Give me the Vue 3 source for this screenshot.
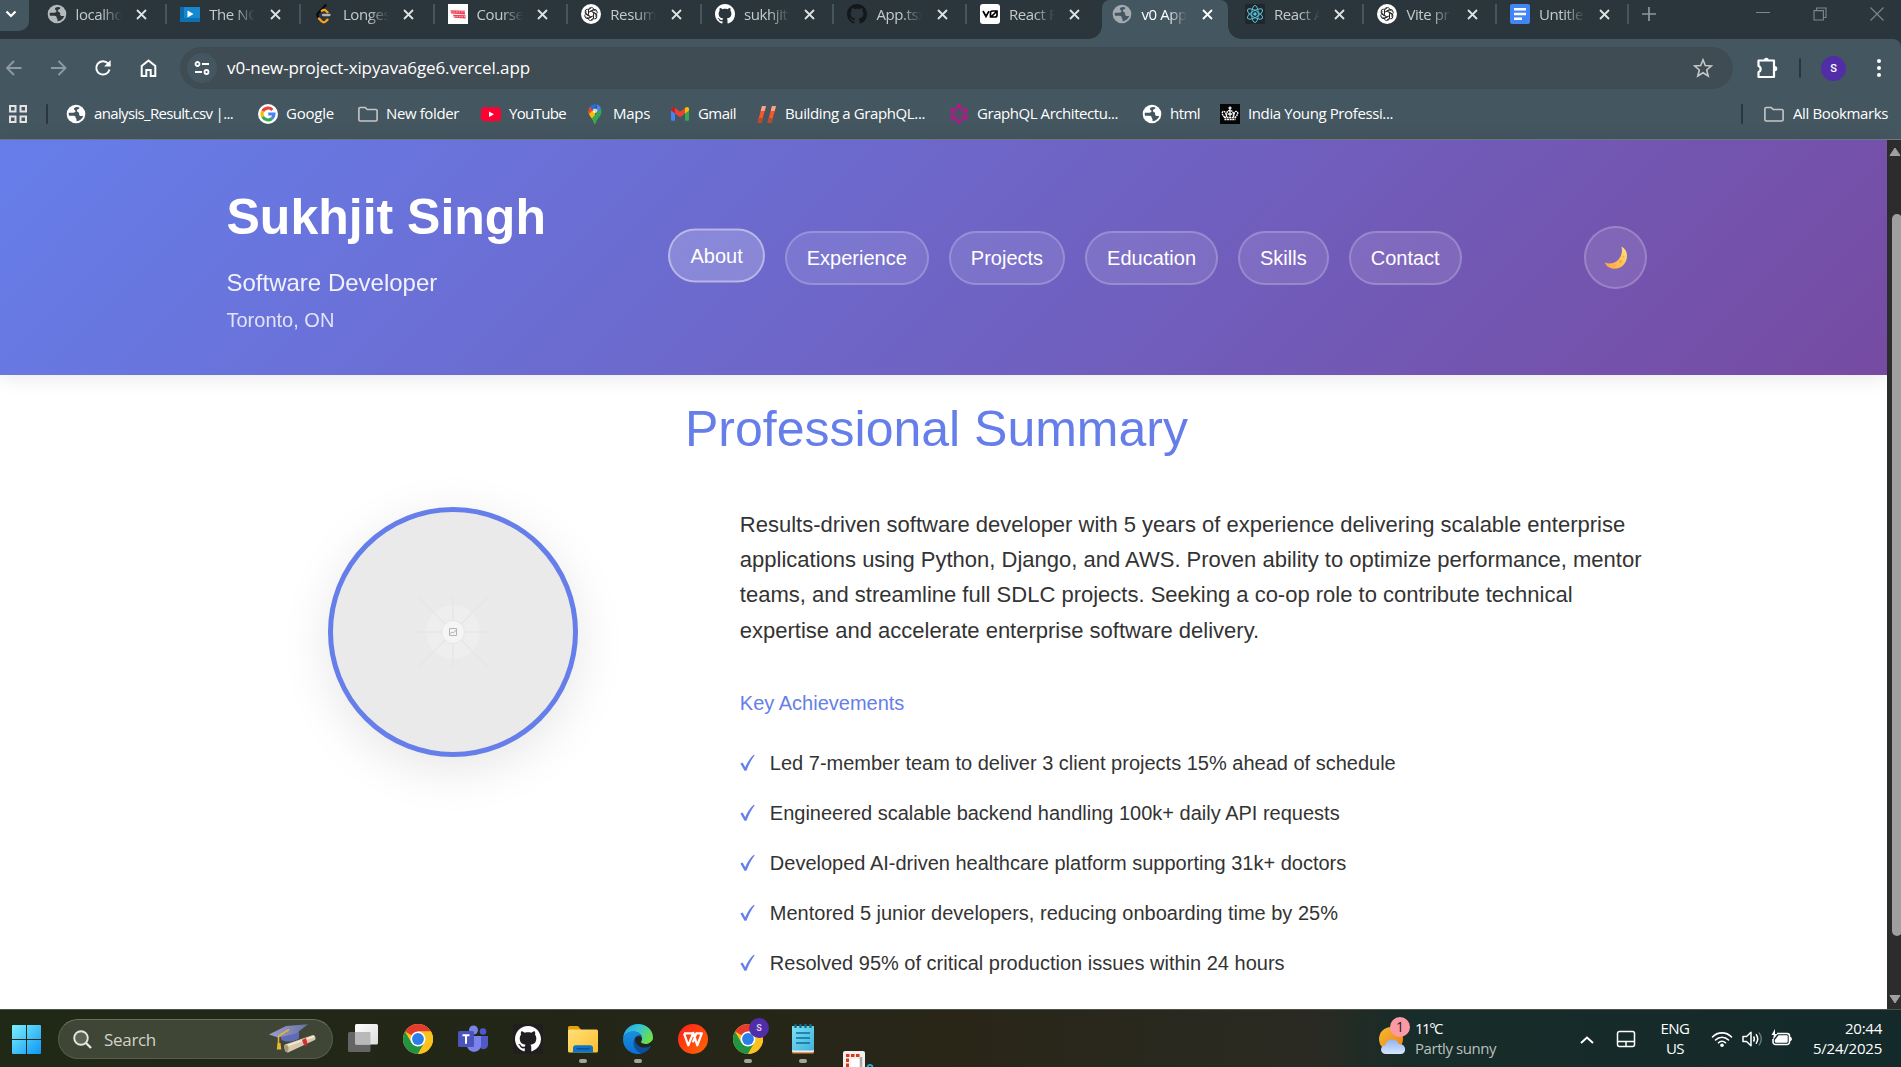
<script setup>
const tabs = [
  { icon: 'globe', text: 'localho', dim: true, width: 133.7 },
  { icon: 'play', text: 'The NO', width: 133.7 },
  { icon: 'leet', text: 'Longes', width: 133.7 },
  { icon: 'course', text: 'Course', width: 133.7 },
  { icon: 'knot', text: 'Resum', width: 133.7 },
  { icon: 'github', text: 'sukhjit', width: 132.5 },
  { icon: 'github', text: 'App.tsx', dark: true, width: 132.5 },
  { icon: 'vzero', text: 'React F', width: 132.5 },
  { icon: 'globe', text: 'v0 App', dim: true, active: true, width: 132.5 },
  { icon: 'react', text: 'React A', width: 132.5 },
  { icon: 'knot', text: 'Vite pr', width: 132.5 },
  { icon: 'docs', text: 'Untitle', width: 132.5 },
]

// span: distance to the next bookmark, text: width of the label
const bookmarks = [
  { icon: 'globe', label: 'analysis_Result.csv |...', span: 192, text: 139 },
  { icon: 'google', label: 'Google', span: 100, text: 48 },
  { icon: 'folder', label: 'New folder', span: 123, text: 73 },
  { icon: 'youtube', label: 'YouTube', span: 104, text: 57 },
  { icon: 'pin', label: 'Maps', span: 85, text: 37 },
  { icon: 'gmail', label: 'Gmail', span: 87, text: 38 },
  { icon: 'slashes', label: 'Building a GraphQL...', span: 192, text: 140 },
  { icon: 'graphql', label: 'GraphQL Architectu...', span: 193, text: 141 },
  { icon: 'globe', label: 'html', span: 78, text: 30 },
  { icon: 'crown', label: 'India Young Professi...', span: 180, text: 145 },
]

const nav = ['About', 'Experience', 'Projects', 'Education', 'Skills', 'Contact']

const achievements = [
  'Led 7-member team to deliver 3 client projects 15% ahead of schedule',
  'Engineered scalable backend handling 100k+ daily API requests',
  'Developed AI-driven healthcare platform supporting 31k+ doctors',
  'Mentored 5 junior developers, reducing onboarding time by 25%',
  'Resolved 95% of critical production issues within 24 hours',
]

const apps = [
  { icon: 'taskview' },
  { icon: 'chrome' },
  { icon: 'teams' },
  { icon: 'githubapp' },
  { icon: 'explorer', open: true },
  { icon: 'edge', open: true },
  { icon: 'wps' },
  { icon: 'chrome', open: true, badge: 'S' },
  { icon: 'notepad', open: true },
]

// Spreads a label's letters so that it takes the given width.
const vFit = {
  mounted(el, { value }) {
    const width = el.getBoundingClientRect().width
    const count = el.textContent.trim().length
    el.style.letterSpacing = ((value - width) / count).toFixed(3) + 'px'
  },
}
</script>

<template>
  <div class="screen">
    <svg class="defs" width="0" height="0">
      <defs>
        <linearGradient id="gWin" x1="0" y1="0" x2="1" y2="1"><stop offset="0" stop-color="#7df0fc" /><stop offset="1" stop-color="#0b97f5" /></linearGradient>
        <linearGradient id="gFolder" x1="0" y1="0" x2="1" y2="1"><stop offset="0" stop-color="#ffe07a" /><stop offset="1" stop-color="#fcbf2d" /></linearGradient>
        <linearGradient id="gWps" x1="0" y1="0" x2="1" y2="1"><stop offset="0" stop-color="#ff1d1d" /><stop offset="1" stop-color="#ff6a00" /></linearGradient>
        <linearGradient id="gEdge" x1="0" y1="0" x2="1" y2=".5"><stop offset="0" stop-color="#1fa5e0" /><stop offset=".5" stop-color="#35c3d6" /><stop offset="1" stop-color="#6be04b" /></linearGradient>
        <linearGradient id="gEdge2" x1="0" y1="0" x2="0" y2="1"><stop offset="0" stop-color="#1c8fe0" /><stop offset="1" stop-color="#0b6fd0" /></linearGradient>
        <linearGradient id="gNote" x1="0" y1="0" x2="1" y2="1"><stop offset="0" stop-color="#7fdff5" /><stop offset="1" stop-color="#3fb3da" /></linearGradient>
        <linearGradient id="gMoon" x1="1" y1="0" x2="0" y2="1"><stop offset="0" stop-color="#ffe484" /><stop offset=".5" stop-color="#ffc556" /><stop offset="1" stop-color="#ff9f45" /></linearGradient>
        <linearGradient id="gSun" x1="0" y1="0" x2="1" y2="1"><stop offset="0" stop-color="#f3bb2f" /><stop offset="1" stop-color="#f17d1b" /></linearGradient>
        <linearGradient id="gCloud" x1="0" y1="0" x2="0" y2="1"><stop offset="0" stop-color="#8fb4f2" /><stop offset="1" stop-color="#d8e6fd" /></linearGradient>
        <linearGradient id="gView" x1="0" y1="0" x2="1" y2="1"><stop offset="0" stop-color="#fff" /><stop offset="1" stop-color="#dcdcdc" /></linearGradient>
        <linearGradient id="gCap" x1="0" y1="0" x2="1" y2="0"><stop offset="0" stop-color="#9aa0d0" /><stop offset="1" stop-color="#6970a4" /></linearGradient>
      </defs>

      <symbol id="globe" viewBox="0 0 20 20">
        <circle cx="10" cy="10" r="9.3" fill="currentColor" />
        <path d="M11 2.900c-2.200.3-3.300 1.200-3 2.300.2 1 1.400.8 1.500 1.800.1 1.300-1 1.700-2.300 1.700H2.800a7.400 7.400 0 0 0 .2 3.100h4.600c1.300 0 2 .7 2 1.800 0 .9.900 1 .9 1.900v1.800c3.300-.2 5.900-2.300 6.700-5.200h-2c-1.400 0-2.100-.7-2.100-1.800V9.200c0-.8-.7-1.100-1.300-1.300-.9-.3-1.100-1.100-.7-1.900.3-.7 1.400-.8 2-1.300l.300-1.100A7.500 7.500 0 0 0 11 2.900z" fill="var(--hole, #445660)" />
      </symbol>
      <symbol id="play" viewBox="0 0 20 20">
        <rect y="3" width="20" height="15" fill="#1489cf" /><rect y="3" width="4" height="15" fill="#0a6cad" /><rect y="14" width="20" height="4" fill="#0b71b4" />
        <path d="M7.500 6.500v7l6-3.500z" fill="#fff" />
      </symbol>
      <symbol id="leet" viewBox="0 0 20 20">
        <g fill="none" stroke-width="2.300" stroke-linecap="round"><path d="M11.500 1.200 4.600 8.600c-1.600 1.600-1.600 3-.3 4.600" stroke="#0b0b0b" /><path d="M7.800 6.800c1.500-1.200 3.200-1 4.400.2l1.300 1.300M5 14.500l2.600 2.800c1.300 1.300 3 1.300 4.300 0l1.600-1.700" stroke="#ffa116" /><path d="M9 11h6.500" stroke="#b3b3b3" /></g>
      </symbol>
      <symbol id="course" viewBox="0 0 20 20">
        <rect width="20" height="20" fill="#fff" /><path d="M2.500 6.200 17 6.800v3.600l-14-.8zM5 10.800l12.500.4v3.400l-11.500-.8z" fill="#ef4056" /><path d="M3 8h14M6 12.600h11" stroke="#fff" stroke-width=".6" stroke-dasharray="1.500 1" />
      </symbol>
      <symbol id="knot" viewBox="0 0 20 20">
        <circle cx="10" cy="10" r="10" fill="#fff" />
        <g fill="none" stroke="#222" stroke-width=".9">
          <path v-for="n in 6" :key="n" d="M7.500 9.800V6.200c0-3.100 4.200-3.700 5.200-1.200M7.500 8.400l3.300-1.900c1.600-.9 3.400-.4 4.100.8" :transform="`rotate(${n * 60} 10 10)`" />
        </g>
      </symbol>
      <symbol id="github" viewBox="0 0 16 16">
        <path fill="currentColor" d="M8 0C3.580 0 0 3.580 0 8c0 3.540 2.290 6.530 5.470 7.590.4.070.55-.17.55-.38 0-.19-.01-.82-.01-1.490-2.010.37-2.530-.49-2.690-.94-.09-.23-.48-.94-.82-1.130-.28-.15-.68-.52-.01-.53.63-.01 1.080.58 1.230.82.72 1.210 1.870.87 2.330.66.07-.52.28-.87.51-1.070-1.780-.2-3.640-.89-3.640-3.950 0-.87.31-1.590.82-2.150-.08-.2-.36-1.020.08-2.120 0 0 .67-.21 2.200.82.64-.18 1.320-.27 2-.27s1.360.09 2 .27c1.530-1.040 2.200-.82 2.200-.82.44 1.100.16 1.920.08 2.120.51.56.82 1.270.82 2.150 0 3.070-1.870 3.750-3.650 3.950.29.25.54.73.54 1.480 0 1.070-.01 1.930-.01 2.200 0 .21.15.46.55.38A8.010 8.010 0 0 0 16 8c0-4.420-3.580-8-8-8z" />
      </symbol>
      <symbol id="vzero" viewBox="0 0 20 20">
        <rect width="20" height="20" rx="3" fill="#fff" /><path d="M3 7l3 5.500L9 7.200M10.500 13V9c0-1.300.7-2 2-2H17v4c0 1.300-.7 2-2 2h-4.500zM11.500 12.500l5-5" fill="none" stroke="#000" stroke-width="1.700" />
      </symbol>
      <symbol id="react" viewBox="0 0 20 20">
        <rect width="20" height="20" rx="2" fill="#20262b" /><circle cx="10" cy="10" r="1.700" fill="#58c4dc" />
        <g fill="none" stroke="#58c4dc"><ellipse v-for="n in 3" :key="n" cx="10" cy="10" rx="8.500" ry="3.300" :transform="`rotate(${n * 60 + 30} 10 10)`" /></g>
      </symbol>
      <symbol id="docs" viewBox="0 0 20 20">
        <rect width="20" height="20" rx="2" fill="#4285f4" /><path d="M4 5.300h12M4 10h12M4 14.700h8" stroke="#fff" stroke-width="2.400" />
      </symbol>

      <symbol id="google" viewBox="0 0 24 24">
        <circle cx="12" cy="12" r="12" fill="#fff" />
        <g fill="none" stroke-width="3.700"><path d="M17.300 7.200A7.200 7.200 0 0 0 5.700 8.600" stroke="#ea4335" /><path d="M5.700 8.600a7.200 7.200 0 0 0 0 6.800" stroke="#fbbc05" /><path d="M5.700 15.400a7.200 7.200 0 0 0 11 2" stroke="#34a853" /><path d="M16.700 17.400A7.200 7.200 0 0 0 19.200 12H12.300" stroke="#4285f4" /></g>
      </symbol>
      <symbol id="folder" viewBox="0 0 20 20">
        <path d="M.9 4.800c0-.9.500-1.300 1.300-1.300h5l2 2h8.600c.8 0 1.300.5 1.300 1.300v8.900c0 .8-.5 1.300-1.300 1.300H2.200c-.8 0-1.300-.5-1.300-1.300z" fill="none" stroke="#c7c7c7" stroke-width="1.600" />
      </symbol>
      <symbol id="youtube" viewBox="0 0 20 20"><rect y="3.200" width="20" height="14" rx="3.600" fill="#ff0033" /><path d="M8 7.400v5.600l5-2.800z" fill="#fff" /></symbol>
      <symbol id="pin" viewBox="0 0 20 20">
        <path d="M10 20c-.8 0-.8-1.800-2-3.800-1.500-2.500-4.500-5-4.500-9L10 7z" fill="#fbbc04" /><path d="M10 20c.8 0 .8-1.800 2-3.800 1.500-2.500 4.500-5 4.500-9 0-1-.2-2-.6-2.800L6.800 14.400C8.700 16.800 9.300 20 10 20z" fill="#34a853" />
        <path d="M4.800 2.800 8 5.500 4 10.200C3 8 3.200 4.800 4.800 2.800z" fill="#ea4335" /><path d="M4.800 2.800C6.500.6 9.300-.3 12 .5L8 5.500z" fill="#1a73e8" /><path d="M12 .5c1.800.6 3.200 2 3.900 3.900L11.800 9z" fill="#4285f4" /><circle cx="10" cy="6.800" r="2.400" fill="#fff" opacity=".75" />
      </symbol>
      <symbol id="gmail" viewBox="0 0 20 20">
        <path d="M1 5.500v10c0 .8.500 1.300 1.300 1.300H5V8.500z" fill="#4285f4" /><path d="M19 5.500v10c0 .8-.5 1.300-1.300 1.300H15V8.500z" fill="#34a853" /><path d="M15 4v5.500l4-3V5c0-2-2.300-2.800-4-1z" fill="#fbbc04" /><path d="M5 9.500V4l5 3.800L15 4v5.500l-5 3.800z" fill="#ea4335" /><path d="M1 5v1.500l4 3V4C3.300 2.200 1 3 1 5z" fill="#c5221f" />
      </symbol>
      <symbol id="slashes" viewBox="0 0 20 20">
        <path d="M5 2h4L4.500 19H.5zM15 2h4l-4.500 17h-4z" fill="#f4582b" /><path d="M5 2h4L7.700 7H3.700zM15 2h4l-1.300 5h-4z" fill="#f8a287" /><path d="M1.900 14h4l-1.400 5H.5zM11.900 14h4l-1.400 5h-4z" fill="#ba4a2d" />
      </symbol>
      <symbol id="graphql" viewBox="0 0 20 20">
        <g fill="none" stroke="#e10098" stroke-width="1"><path d="M10 2l7 4v8l-7 4-7-4V6zM10 2l7 12H3z" /></g>
        <g fill="#e10098"><circle cx="10" cy="2" r="1.600" /><circle cx="17" cy="6" r="1.600" /><circle cx="17" cy="14" r="1.600" /><circle cx="10" cy="18" r="1.600" /><circle cx="3" cy="14" r="1.600" /><circle cx="3" cy="6" r="1.600" /></g>
      </symbol>
      <symbol id="crown" viewBox="0 0 20 20">
        <rect width="20" height="20" fill="#050505" /><path d="M4.500 15.500h11M4.800 13.500C2.500 11 1.500 9 2.800 7.800 4.400 6.500 6 8 6.500 13c0-4 .5-6.500 3.500-6.500s3.500 2.500 3.500 6.500c.5-5 2.100-6.500 3.700-5.200 1.300 1.200.3 3.200-2 5.700z" fill="none" stroke="#fff" stroke-width="1.400" stroke-dasharray="2 .6" /><path d="M10 2.500v10M8.500 4h3M8 10h4" stroke="#fff" stroke-width="1.300" />
      </symbol>

      <symbol id="taskview" viewBox="0 0 30 30">
        <rect y="8" width="22.500" height="20" rx="1.500" fill="#656565" /><rect x="7" y="0" width="23" height="20.500" rx="1.500" fill="url(#gView)" /><path d="M7 8h15.500v12.500H8.500A1.500 1.500 0 0 1 7 19z" fill="#b9b9b9" />
      </symbol>
      <symbol id="chrome" viewBox="0 0 30 30">
        <circle cx="15" cy="15" r="15" fill="#fcc31e" /><path d="M15 15 2.010 7.500A15 15 0 0 1 27.990 7.500H15z" fill="#e33b2e" /><path d="M2.010 7.500A15 15 0 0 0 15 30l6.500-11.200L15 15 8.500 18.800z" fill="#229342" />
        <path d="M28 7.500H15v7.500l6.500 3.700L15 30A15 15 0 0 0 28 7.500z" fill="#fcc31e" /><circle cx="15" cy="15" r="7.500" fill="#fff" /><circle cx="15" cy="15" r="5.900" fill="#2b7de9" />
      </symbol>
      <symbol id="teams" viewBox="0 0 30 30">
        <circle cx="25" cy="7.500" r="3.300" fill="#5059c9" /><path d="M20 12h10v8.500c0 5-6 6-8 3z" fill="#5059c9" /><circle cx="15.500" cy="6" r="4.500" fill="#7b83eb" /><path d="M9 12h14v9c0 9-14 9-14 0z" fill="#7b83eb" /><rect y="7" width="16" height="16" rx="1.500" fill="#4b53bc" /><path d="M4.500 11.300h7M8 11.300v8.500" stroke="#fff" stroke-width="2" />
      </symbol>
      <symbol id="githubapp" viewBox="0 0 30 30"><rect width="30" height="30" fill="#211d21" /><use href="#github" x="2" y="2" width="26" height="26" color="#fff" /></symbol>
      <symbol id="explorer" viewBox="0 0 30 30">
        <path d="M0 4c0-1.500.7-2 2-2h8l3 3.500V10H0z" fill="#e3a008" /><rect y="5.500" width="30" height="23" rx="1.500" fill="url(#gFolder)" /><path d="M5 28.500V24c0-1.800 1-2.800 2.800-2.800h14.400c1.800 0 2.800 1 2.800 2.800v4.500z" fill="#0f74c4" /><path d="M8.500 24.800h13" stroke="#064a86" stroke-width="1.200" />
      </symbol>
      <symbol id="edge" viewBox="0 0 30 30">
        <circle cx="15" cy="15" r="15" fill="#0c4f9e" /><path d="M.2 14C1 5 8 0 15 0c8 0 15 5.500 15 13.500 0 4.500-3.800 6.500-7.500 6.500-3 0-4.500-1-4.500-2s1-1.500 1-4c0-3-3-6.500-8.500-6.500C5 7.500 1 10.500.2 14z" fill="url(#gEdge)" /><path d="M.2 14C1 10 5 7.500 10.500 7.500c3.500 0 6 1.400 7.400 3.200C13 10.500 10.500 15 10.500 18.500c0 5 3 9.500 8 11-1 .4-2.500.5-3.500.5C7 30-.8 23.500.2 14z" fill="url(#gEdge2)" /><path d="M12 16c.5 4.500 5 8 10 7.500 2.500-.2 4.300-1.200 5.700-1.200.8 0 .6.700.2 1.200l2.100-1.500V16l-4 3.500c-1 .4-2.300.5-3.500.5-3 0-4.500-1-4.500-2s1-1.500 1-4c-4-3-7-1-7 2z" fill="#222618" />
      </symbol>
      <symbol id="wps" viewBox="0 0 30 30"><circle cx="15" cy="15" r="15" fill="url(#gWps)" /><path d="M6 9.300h9.500M6 9.300l4.300 12 5-12.500 4 12.500 4.500-12h-5.500l-3.500 9" fill="none" stroke="#fff" stroke-width="2.200" stroke-linejoin="round" /></symbol>
      <symbol id="notepad" viewBox="0 0 30 30"><rect x="4" y="2" width="22" height="28" rx="1.500" fill="#a2541a" /><rect x="4" y="2" width="22" height="26.500" rx="1.500" fill="#eee" /><rect x="4" y="2" width="22" height="24.500" rx="1" fill="url(#gNote)" /><path d="M8 9h14M8 14h14M8 19h14" stroke="#0a6f9e" stroke-width="1.700" /><path d="M7.500 0v4M12.500 0v4M17.500 0v4M22.500 0v4" stroke="#0a6f8e" stroke-width="2.300" /></symbol>
    </svg>

    <div class="tabstrip">
      <div class="menu"><svg width="12" height="8" viewBox="0 0 12 8"><path d="M1.500 1.500 6 6l4.500-4.500" fill="none" stroke="#fff" stroke-width="2.200" /></svg></div>
      <div v-for="(tab, i) in tabs" :key="i" class="tab" :class="{ active: tab.active, nosep: i === 7 || tab.active }" :style="{ width: tab.width + 'px' }">
        <svg class="favicon" :class="{ dim: tab.dim, dark: tab.dark }" width="20" height="20"><use :href="'#' + tab.icon" /></svg>
        <span class="tabtext">{{ tab.text }}</span>
        <svg class="close" width="11" height="11" viewBox="0 0 11 11"><path d="M1 1l9 9M10 1l-9 9" stroke="currentColor" stroke-width="1.800" /></svg>
      </div>
      <svg class="plus" width="14" height="14" viewBox="0 0 14 14"><path d="M7 0v14M0 7h14" stroke="#8d979c" stroke-width="1.700" /></svg>
      <div class="winbtns">
        <svg width="14" height="14" viewBox="0 0 14 14"><path d="M0 5.500h14" stroke="#7c878d" stroke-width="1" /></svg>
        <svg width="14" height="14" viewBox="0 0 14 14"><path d="M1 3.600h9.400V13H1zM3.500 3.500V1H13v9.500h-2.500" fill="none" stroke="#7c878d" stroke-width="1.100" /></svg>
        <svg width="14" height="14" viewBox="0 0 14 14"><path d="M.5.500l13 13M13.500.500l-13 13" stroke="#7c878d" stroke-width="1.100" /></svg>
      </div>
    </div>

    <div class="toolwrap">
    <div class="toolbar">
      <div class="navbtns">
        <svg width="20" height="20" viewBox="0 0 20 20"><path d="M17.500 10H3.500M10 3l-7 7 7 7" fill="none" stroke="#8f9aa0" stroke-width="1.900" /></svg>
        <svg width="20" height="20" viewBox="0 0 20 20"><path d="M2 10h14M9.500 3l7 7-7 7" fill="none" stroke="#8f9aa0" stroke-width="1.900" /></svg>
        <svg width="20" height="20" viewBox="0 0 20 20"><path d="M16.500 11.500A6.700 6.700 0 1 1 15 5.400l2 2.200" fill="none" stroke="#fff" stroke-width="2" /><path d="M17.600 2v6.500h-6.500z" fill="#fff" /></svg>
        <svg width="20" height="20" viewBox="0 0 20 20"><path d="M3.700 18V8l6.800-5.500L17.300 8v10h-4.600v-6H8.300v6z" fill="none" stroke="#fff" stroke-width="2" /></svg>
      </div>
      <div class="omnibox">
        <div class="siteinfo"><svg width="16" height="16" viewBox="0 0 16 16"><g fill="none" stroke="#fff" stroke-width="1.800"><circle cx="3.500" cy="4" r="2" /><path d="M8 4h7M1 12h7" /><circle cx="12.500" cy="12" r="2" /></g></svg></div>
        <span class="url" v-fit="303">v0-new-project-xipyava6ge6.vercel.app</span>
        <svg class="star" width="20" height="20" viewBox="0 0 20 20"><path d="M10 1.800l2.300 5.700 6 .5-4.600 4 1.500 6-5.200-3.300L4.800 18l1.500-6L1.700 8l6-.5z" fill="none" stroke="#c7c7c7" stroke-width="1.600" /></svg>
      </div>
      <svg class="puzzle" width="22" height="22" viewBox="0 0 22 22"><path d="M2.500 3.500H18V20H2.500v-5c2.800-.8 2.800-5.200 0-6z" fill="none" stroke="#fff" stroke-width="2.200" stroke-linejoin="round" /><path d="M7.800 3.300a2.500 2.500 0 0 1 5 0zM18.700 9a2.600 2.600 0 0 1 0 5.200z" fill="#fff" /></svg>
      <i class="bar"></i>
      <div class="avatar">S</div>
      <svg class="dots" width="4" height="18" viewBox="0 0 4 18"><g fill="#fff"><circle cx="2" cy="2" r="2" /><circle cx="2" cy="9" r="2" /><circle cx="2" cy="16" r="2" /></g></svg>
    </div>
    </div>

    <div class="bookmarks">
      <svg class="grid" width="18" height="18" viewBox="0 0 18 18"><path d="M1 1h5.500v5.500H1zM11.500 1H17v5.500h-5.500zM1 11.500h5.500V17H1zM11.500 11.500H17V17h-5.500z" fill="none" stroke="#e3e3e3" stroke-width="2" /></svg>
      <i class="bar"></i>
      <div class="marks">
        <div v-for="b in bookmarks" :key="b.label" class="mark" :style="{ width: b.span + 'px' }">
          <svg width="20" height="20"><use :href="'#' + b.icon" /></svg><span v-fit="b.text">{{ b.label }}</span>
        </div>
      </div>
      <i class="bar end"></i>
      <div class="mark all"><svg width="22" height="20"><use href="#folder" /></svg><span v-fit="95">All Bookmarks</span></div>
    </div>

    <div class="viewport">
      <div class="page">
        <header class="hero">
          <div class="brand">
            <h1>Sukhjit Singh</h1>
            <p class="role">Software Developer</p>
            <p class="place">Toronto, ON</p>
          </div>
          <nav>
            <a v-for="(n, i) in nav" :key="n" :class="{ current: i === 0 }">{{ n }}</a>
          </nav>
          <div class="toggle">
            <svg width="24" height="24" viewBox="0 0 24 24"><path d="M17.500.5c3.500 2 5.500 5.200 5.500 9.200C23 17 17.500 22.800 10.500 22.800 6 22.800 2.300 20.300.6 16.500c5.200 2 10.600.8 14-3.100 3.300-3.800 4-8.500 2.900-12.900z" fill="url(#gMoon)" /><g fill="#eea444" opacity=".7"><circle cx="16.500" cy="15.500" r="1.700" /><circle cx="10.500" cy="19.500" r="1.200" /><circle cx="19.500" cy="10.500" r="1" /></g></svg>
          </div>
        </header>
        <main>
          <h2>Professional Summary</h2>
          <div class="columns">
            <div class="portrait">
              <svg width="240" height="240" viewBox="0 0 240 240">
                <g stroke="#e4e4e4"><path d="M84 120h72M120 84v72M85 85l70 70M155 85l-70 70" /></g>
                <circle cx="120" cy="120" r="27" fill="#eeeeee" />
                <g stroke="#e6e6e6" stroke-width="1.500"><path d="M93 120h54M120 93v54M101 101l38 38M139 101l-38 38" /></g>
                <circle cx="120" cy="120" r="11.500" fill="#f5f5f5" stroke="#e6e6e6" />
                <path d="M116.500 116.500h7v7h-7zM117 122l2-2 1.500 1 2.500-3" fill="none" stroke="#b4b4b4" />
              </svg>
            </div>
            <div class="copy">
              <p>Results-driven software developer with 5 years of experience delivering scalable enterprise<br>applications using Python, Django, and AWS. Proven ability to optimize performance, mentor<br>teams, and streamline full SDLC projects. Seeking a co-op role to contribute technical<br>expertise and accelerate enterprise software delivery.</p>
              <h3>Key Achievements</h3>
              <ul>
                <li v-for="a in achievements" :key="a"><svg width="15" height="18" viewBox="0 0 15 18"><path d="M.4 9.600 2.600 8.600l2.600 4.600C7.500 8 10 4 13.800.700l.9.500C11 6 8.600 11 6.400 16.800H4.500z" fill="#667eea" /></svg>{{ a }}</li>
              </ul>
            </div>
          </div>
        </main>
      </div>
      <div class="scroll">
        <svg width="12" height="10" viewBox="0 0 12 10"><path d="M6 1l5 7.500H1z" fill="#9f9f9f" stroke="#9f9f9f" stroke-linejoin="round" /></svg>
        <div class="thumb"></div>
        <svg width="12" height="10" viewBox="0 0 12 10"><path d="M6 9 1 1.500h10z" fill="#9f9f9f" stroke="#9f9f9f" stroke-linejoin="round" /></svg>
      </div>
    </div>

    <div class="taskbar">
      <svg class="win" width="29" height="29" viewBox="0 0 29 29"><path d="M1 0h13v14H0V1a1 1 0 0 1 1-1zM15 0h13a1 1 0 0 1 1 1v13H15zM0 15h14v14H1a1 1 0 0 1-1-1zM15 15h14v13a1 1 0 0 1-1 1H15z" fill="url(#gWin)" /></svg>
      <div class="search">
        <svg width="19" height="19" viewBox="0 0 19 19"><circle cx="8" cy="8" r="6.800" fill="#5d6454" stroke="#e6e6e6" stroke-width="1.900" /><path d="M13 13l5 5" stroke="#e6e6e6" stroke-width="2.400" /></svg>
        <span v-fit="52">Search</span>
        <svg class="cap" width="48" height="30" viewBox="0 0 48 30">
          <path d="M12 8v7c3 4 15 3 18-1V6z" fill="#5f6cb5" /><path d="M0 10.500 17 2l22-1.800L27 9.500l-18 4z" fill="url(#gCap)" /><path d="M20 5.500 9.500 12v9" fill="none" stroke="#e9b334" stroke-width="1.500" /><path d="M8.500 19h3l.8 6.500H7.800z" fill="#eeb62c" />
          <path d="M16 20.500 44 11c2-.5 3.500 4 1.800 5L19 28.500c-2.500.5-5-6.500-3-8z" fill="#d8c9ae" /><path d="M17 22l28-9.500" stroke="#f5ecd9" stroke-width="1.500" /><ellipse cx="17.500" cy="24.500" rx="2" ry="3.600" fill="#a89675" /><path d="M33 16l4-2 1.500 5.500-2 3-2-2.500z" fill="#d22f2f" />
        </svg>
      </div>
      <div class="apps">
        <div v-for="(app, i) in apps" :key="i" class="app" :class="{ open: app.open }">
          <svg width="30" height="30"><use :href="'#' + app.icon" /></svg>
          <b v-if="app.badge">{{ app.badge }}</b>
        </div>
      </div>
      <svg class="snip" width="32" height="16" viewBox="0 0 32 16"><rect width="22" height="20" rx="2" fill="#f0f0f0" /><path d="M4.500 16V4.500H17" fill="none" stroke="#d83b12" stroke-width="3" stroke-dasharray="3.500 1.500" /><rect x="8" y="8" width="9" height="9" fill="#fff" /><path d="M18 6v10" stroke="#a9a9a9" stroke-width="2.500" /><circle cx="27" cy="16.500" r="2.500" fill="none" stroke="#2aa5dd" stroke-width="1.800" /></svg>
      <div class="weather">
        <svg width="30" height="36" viewBox="0 0 30 36"><circle cx="12" cy="21" r="12" fill="url(#gSun)" /><path d="M7 36c-6 0-7-8-.5-9C8 20 18 20 19.500 26c8-1 9 10 2 10z" fill="url(#gCloud)" /></svg>
        <b>1</b>
      </div>
      <div class="two forecast"><span v-fit="27">11°C</span><em v-fit="81">Partly sunny</em></div>
      <div class="tray">
        <svg class="chev" width="14" height="8" viewBox="0 0 14 8"><path d="M1 7l6-5.500L13 7" fill="none" stroke="#fff" stroke-width="2" /></svg>
        <svg class="pad" width="20" height="18" viewBox="0 0 20 18"><path d="M3.500 1.500h13a2 2 0 0 1 2 2v11a2 2 0 0 1-2 2h-13a2 2 0 0 1-2-2v-11a2 2 0 0 1 2-2zM1.500 11.500h17M10 11.500v5" fill="none" stroke="#fff" stroke-width="1.500" /></svg>
        <div class="two lang"><span v-fit="29">ENG</span><span v-fit="18">US</span></div>
        <svg class="wifi" width="22" height="18" viewBox="0 0 22 18"><g fill="none" stroke="#fff" stroke-width="1.600" stroke-linecap="round"><path d="M1.500 7a13 13 0 0 1 19 0M4.500 10a9 9 0 0 1 13 0M7.500 12.800a5 5 0 0 1 7 0" /></g><circle cx="11" cy="15.300" r="1.800" fill="#fff" /></svg>
        <svg class="vol" width="21" height="18" viewBox="0 0 21 18"><path d="M1 6.500h3.500L9 2.200v13.600l-4.500-4.300H1z" fill="none" stroke="#fff" stroke-width="1.500" stroke-linejoin="round" /><path d="M11.500 6.500q1.800 2.500 0 5M14 4.300q3.500 4.700 0 9.400" fill="none" stroke="#fff" stroke-width="1.500" /><path d="M17 2.500q4.500 6.500 0 13" fill="none" stroke="#6f8280" stroke-width="1.300" /></svg>
        <svg class="bat" width="22" height="18" viewBox="0 0 22 18"><path d="M6 4.500h10a2.500 2.500 0 0 1 2.500 2.500v6a2.500 2.500 0 0 1-2.500 2.500H4.500A2.500 2.500 0 0 1 2 13v-3" fill="none" stroke="#fff" stroke-width="1.600" /><path d="M7.500 6.300H15.500c.8 0 1.200.4 1.200 1.200v5c0 .8-.4 1.200-1.200 1.200H5c-.8 0-1.200-.4-1.200-1.200V11z" fill="#fff" /><path d="M19.500 8q2 2 0 4z" fill="#fff" stroke="#fff" /><path d="M4 0 .5 6h2.300L2 11l4.500-6H4z" fill="#fff" /></svg>
        <div class="two clock"><span v-fit="37">20:44</span><span v-fit="69">5/24/2025</span></div>
      </div>
    </div>
  </div>
</template>

<style>
body { margin: 0; background: #fff; overflow: hidden; }
</style>

<style scoped>
* { box-sizing: border-box; }
.screen { width: 1901px; height: 1067px; overflow: hidden; display: flex; flex-direction: column; font-family: "Open Sans", "Noto Sans", sans-serif; }
.defs { position: absolute; }
svg { display: block; flex: none; }
h1, h2, h3, p, ul { margin: 0; padding: 0; font-weight: 400; }
span, em { white-space: nowrap; font-style: normal; }

.tabstrip { flex: none; height: 39px; background: #2b363c; display: flex; align-items: flex-start; }
.menu { flex: none; width: 29px; height: 31px; margin-right: 4.500px; background: #445660; border-radius: 0 0 10px 0; display: flex; padding: 10px 0 0 5px; }
.tab { position: relative; height: 39px; flex: none; display: flex; align-items: flex-start; padding: 4px 0 0 13px; color: #c5cacc; --hole: #2b363c; }
.tab::after { content: ""; position: absolute; right: 0; top: 4px; width: 2px; height: 20px; background: #445660; }
.tab.nosep::after { display: none; }
.tab.active { color: #fff; --hole: #445660; }
.tab.active::before { content: ""; position: absolute; left: 3px; right: 4px; top: 0; bottom: 0; background: #445660; border-radius: 8px 8px 0 0; }
.tab.active::after { display: block; left: -10px; right: -9px; top: 26px; width: auto; height: 13px; background: radial-gradient(circle at 0 0, transparent 12.500px, #445660 13px) left / 13px 13px no-repeat, radial-gradient(circle at 100% 0, transparent 12.500px, #445660 13px) right / 13px 13px no-repeat; }
.tab > * { position: relative; }
.favicon { color: #fff; }
.favicon.dim { color: #b4b9bc; }
.active .favicon.dim { color: #a3abb0; }
.favicon.dark { color: #14181a; }
.tabtext { width: 46px; margin-left: 9px; font-size: 15px; letter-spacing: -0.400px; line-height: 21px; -webkit-mask-image: linear-gradient(90deg, #000 55%, transparent); mask-image: linear-gradient(90deg, #000 55%, transparent); }
.close { margin: 5px 0 0 14.500px; color: #dfe2e3; }
.active .close { color: #fff; }
.plus { margin: 7px 0 0 13px; }
.winbtns { margin-left: auto; display: flex; gap: 43px; padding: 7px 17px 0 0; }

.toolwrap { flex: none; background: #2b363c; }
.toolbar { height: 58px; background: #445660; display: flex; align-items: center; border-top-right-radius: 8px; }
.navbtns { display: flex; gap: 24.600px; margin-left: 4px; width: 176px; }
.omnibox { width: 1553px; height: 42px; border-radius: 21px; background: #404c53; display: flex; align-items: center; padding-left: 7px; }
.siteinfo { width: 30px; height: 30px; border-radius: 50%; background: #445660; display: flex; align-items: center; justify-content: center; }
.url { margin-left: 10px; font-size: 17px; color: #fff; line-height: 42px; }
.star { margin: 0 20px 0 auto; }
.puzzle { margin-left: 23px; }
.bar { width: 2px; height: 20px; background: #2b363c; border-radius: 1px; flex: none; }
.toolbar .bar { margin-left: 21px; }
.avatar { width: 25px; height: 25px; margin-left: 20px; border-radius: 50%; background: #512da8; color: #fff; font: 500 11px/25px Roboto, sans-serif; text-align: center; }
.dots { margin-left: 31px; }

.bookmarks { flex: none; height: 43px; background: #445660; border-bottom: 1px solid #6d7b83; display: flex; align-items: flex-start; padding-top: 7px; color: #fff; font-size: 15px; }
.grid { margin: 1px 19px 0 9px; }
.marks { display: flex; margin-left: 18px; }
.mark { display: flex; align-items: center; height: 20px; flex: none; }
.mark span { margin-left: 8px; line-height: 20px; margin-top: -2px; }
.bar.end { margin-left: auto; margin-right: 20px; }
.mark.all { margin-right: 13px; }

.viewport { flex: none; height: 869px; display: flex; background: #fff; font-family: "Liberation Sans", Arial, sans-serif; }
.page { width: 1887px; }
.hero { height: 235px; padding: 0 240.500px 0 226.500px; display: flex; align-items: center; justify-content: space-between; background: linear-gradient(135deg, #667eea 0%, #764ba2 100%); box-shadow: 0 2px 20px rgba(0, 0, 0, .1); color: #fff; }
.brand { margin-top: 7px; }
h1 { font-size: 50px; line-height: 60px; font-weight: 700; }
.role { margin-top: 18px; font-size: 24px; line-height: 36px; opacity: .9; }
.place { margin-top: 4px; font-size: 20px; line-height: 30px; opacity: .8; }
nav { display: flex; gap: 20px; margin-left: .700px; }
nav a { height: 54px; padding: 0 20px; border: 2px solid rgba(255, 255, 255, .2); border-radius: 27px; background: rgba(255, 255, 255, .1); font-size: 20px; line-height: 50px; }
nav a.current { background: rgba(255, 255, 255, .2); border-color: rgba(255, 255, 255, .4); transform: translateY(-2.500px); }
.toggle { width: 63px; height: 63px; border-radius: 50%; border: 2px solid rgba(255, 255, 255, .2); background: rgba(255, 255, 255, .1); display: flex; align-items: center; justify-content: center; padding-left: 1px; }

main { padding: 24px 240.500px 0 226.500px; }
h2 { font-size: 50px; line-height: 60px; color: #667eea; text-align: center; }
.columns { margin-top: 48px; display: grid; grid-template-columns: 1fr 2fr; gap: 60px; }
.portrait { justify-self: center; width: 250px; height: 250px; border: 5px solid #667eea; border-radius: 50%; background: #eaeaea; box-shadow: 0 12px 50px rgba(0, 0, 0, .1); }
.copy { color: #333; }
.copy p { font-size: 22px; line-height: 35.200px; white-space: nowrap; }
h3 { margin-top: 40px; font-size: 20px; line-height: 30px; color: #667eea; }
ul { margin-top: 20px; list-style: none; }
li { display: flex; align-items: center; gap: 15px; font-size: 20px; line-height: 50px; }

.scroll { width: 14px; background: #2c2c2c; display: flex; flex-direction: column; align-items: center; padding: 7px 0 5px 2px; overflow: hidden; }
.thumb { width: 10px; height: 722px; margin: 57px -2px auto 2px; border-radius: 5px; background: #9f9f9f; flex: none; }

.taskbar { flex: none; height: 58px; border-top: 1px solid #4d5247; background: linear-gradient(90deg, #202816 0%, #232617 30%, #292618 50%, #2a2a22 69%, #182c29 74%, #14292a 100%); display: flex; align-items: flex-start; color: #fff; font-size: 15px; }
.win { margin: 15px 0 0 12px; }
.search { margin: 9px 0 0 17px; width: 275px; height: 40px; border-radius: 20px; border: 1px solid #555c4c; border-top-color: #6c7262; background: #404635; display: flex; align-items: center; padding-left: 14px; color: #d0d2cc; font-size: 17px; }
.search span { margin-left: 12px; }
.cap { margin: 0 15px 0 auto; }
.apps { display: flex; gap: 25px; margin-left: 15px; }
.app { position: relative; width: 30px; height: 56px; padding-top: 14px; }
.app.open::after { content: ""; position: absolute; left: 11px; top: 49px; width: 8px; height: 4px; border-radius: 2px; background: #a3a49c; }
.app b { position: absolute; left: 16px; top: 8px; width: 20px; height: 20px; border-radius: 50%; background: #512da8; color: #d4c9ec; font: 700 9px/20px Roboto, sans-serif; text-align: center; }
.snip { margin: 41px 0 0 25px; }
.weather { position: relative; margin: 8px 0 0 504px; width: 36px; }
.weather b { position: absolute; left: 11px; top: -1px; width: 20px; height: 20px; border-radius: 50%; background: #fd99a4; color: #222; font: 400 14px/20px "Open Sans", sans-serif; text-align: center; }
.two { display: flex; flex-direction: column; line-height: 20px; padding-top: 8px; align-items: flex-start; }
.forecast em { color: #b9c1bf; }
.tray { flex: 1; height: 57px; display: flex; align-items: flex-start; margin-left: 84px; }
.chev { margin-top: 26px; }
.pad { margin: 20px 0 0 22px; }
.lang { width: 30px; margin-left: 24px; align-items: center; padding-top: 8px; }
.wifi { margin: 20px 0 0 21px; }
.vol { margin: 20px 0 0 9px; }
.bat { margin: 19px 0 0 8px; }
.clock { margin-left: auto; padding-right: 19px; align-items: flex-end; }
</style>
